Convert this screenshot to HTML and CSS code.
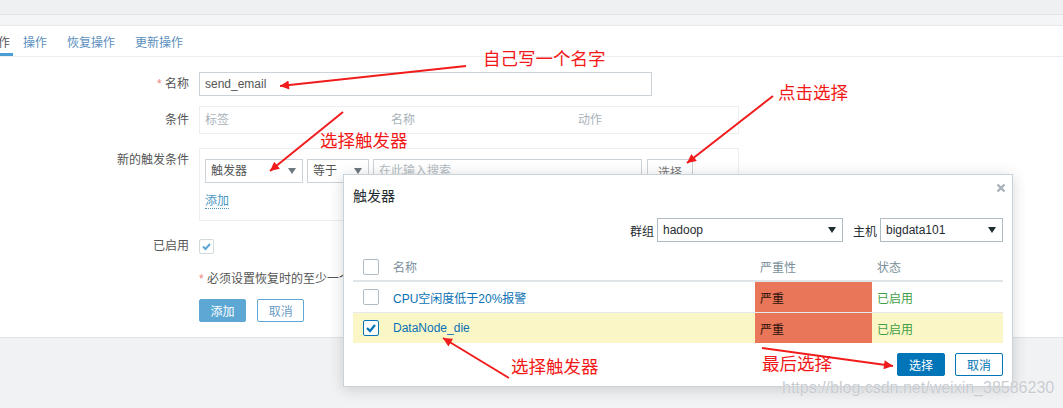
FILE: index.html
```html
<!DOCTYPE html>
<html lang="zh-CN">
<head>
    <meta charset="UTF-8" />
    <title>动作</title>
    <link rel="stylesheet" href="styles.css">
</head>
<body>
    <div class="topbar"></div>
    <div class="subbar"></div>

    <!-- 动作编辑 -->
    <div class="panel">
        <ul class="tabs">
            <li class="active"><a href="#">动作</a></li>
            <li><a href="#">操作</a></li>
            <li><a href="#">恢复操作</a></li>
            <li><a href="#">更新操作</a></li>
        </ul>

        <form class="action-form">
            <div class="form-group group-name">
                <label class="form-label"><span class="req">*</span> 名称</label>
                <div class="form-field">
                    <input type="text" class="text-input name-input" value="send_email" />
                </div>
            </div>
            <div class="form-group group-cond">
                <label class="form-label">条件</label>
                <div class="form-field">
                    <div class="cond-table">
                        <span>标签</span><span>名称</span><span>动作</span>
                    </div>
                </div>
            </div>
            <div class="form-group group-new">
                <label class="form-label">新的触发条件</label>
                <div class="form-field">
                    <div class="new-box">
                        <div class="new-line">
                            <div class="select sel-type">触发器<i class="caret"></i></div>
                            <div class="select sel-op">等于<i class="caret"></i></div>
                            <input type="text" class="text-input search-input" placeholder="在此输入搜索" />
                            <button type="button" class="btn-light">选择</button>
                        </div>
                        <a href="#" class="link-add">添加</a>
                    </div>
                </div>
            </div>
            <div class="form-group group-enabled">
                <label class="form-label">已启用</label>
                <div class="form-field">
                    <span class="chk chk-form">
                        <svg width="13" height="13" viewBox="0 0 13 13"><polyline points="3,6.5 5.5,9 10,4" fill="none" stroke="#5ca7d4" stroke-width="2" /></svg>
                    </span>
                </div>
            </div>
            <div class="form-group group-hint">
                <div class="form-label"></div>
                <div class="form-field hint"><span class="req">*</span> 必须设置恢复时的至少一个操作或更新操作。</div>
            </div>
            <div class="form-group group-btns">
                <div class="form-label"></div>
                <div class="form-field">
                    <button type="button" class="btn-add">添加</button>
                    <button type="button" class="btn-cancel">取消</button>
                </div>
            </div>
        </form>
    </div>

    <!-- 触发器 选择 팝업 -->
    <div class="modal">
        <div class="modal-head">触发器</div>
        <span class="modal-close">
            <svg width="10" height="10" viewBox="0 0 10 10"><path d="M1.5,1.5 L8.5,8.5 M8.5,1.5 L1.5,8.5" stroke="#a9b2ba" stroke-width="2.4" /></svg>
        </span>
        <div class="modal-filter">
            <label>群组</label>
            <div class="select sel-group">hadoop<i class="caret dark"></i></div>
            <label class="lbl-host">主机</label>
            <div class="select sel-host">bigdata101<i class="caret dark"></i></div>
        </div>
        <div class="list">
            <div class="list-head">
                <div class="cell"><span class="chk"></span></div>
                <div class="cell">名称</div>
                <div class="cell pad">严重性</div>
                <div class="cell pad">状态</div>
            </div>
            <div class="list-row">
                <div class="cell"><span class="chk"></span></div>
                <div class="cell"><a href="#">CPU空闲度低于20%报警</a></div>
                <div class="cell pad sev-high">严重</div>
                <div class="cell pad on">已启用</div>
            </div>
            <div class="list-row selected">
                <div class="cell">
                    <span class="chk checked">
                        <svg width="14" height="14" viewBox="0 0 14 14"><polyline points="3,7 6,10 11,4" fill="none" stroke="#0275b8" stroke-width="2.2" /></svg>
                    </span>
                </div>
                <div class="cell"><a href="#">DataNode_die</a></div>
                <div class="cell pad sev-high">严重</div>
                <div class="cell pad on">已启用</div>
            </div>
        </div>
        <div class="modal-foot">
            <button type="button" class="btn-primary">选择</button>
            <button type="button" class="btn-outline">取消</button>
        </div>
    </div>

    <!-- 주석 화살표 -->
    <svg class="marks" width="1063" height="408" viewBox="0 0 1063 408">
        <defs>
            <marker id="head" viewBox="0 0 10 10" refX="10" refY="5" markerWidth="7.5" markerHeight="4.5" orient="auto">
                <path d="M0,0 L10,5 L0,10 z" fill="#f01c1c" />
            </marker>
        </defs>
        <line x1="466" y1="66" x2="280" y2="86" stroke="#f01c1c" stroke-width="2" marker-end="url(#head)" />
        <line x1="343" y1="112" x2="270" y2="171" stroke="#f01c1c" stroke-width="2" marker-end="url(#head)" />
        <line x1="773" y1="96" x2="687" y2="163" stroke="#f01c1c" stroke-width="2" marker-end="url(#head)" />
        <line x1="509" y1="378" x2="443" y2="338" stroke="#f01c1c" stroke-width="2" marker-end="url(#head)" />
        <line x1="762" y1="348" x2="893" y2="366" stroke="#f01c1c" stroke-width="2" marker-end="url(#head)" />
    </svg>
    <span class="note note-name">自己写一个名字</span>
    <span class="note note-type">选择触发器</span>
    <span class="note note-click">点击选择</span>
    <span class="note note-pick">选择触发器</span>
    <span class="note note-last">最后选择</span>

    <span class="watermark">https://blog.csdn.net/weixin_38586230</span>
</body>
</html>
```

FILE: styles.css
```css
* {
    box-sizing:border-box;
}
body {
    position:relative;
    width:1063px;
    height:408px;
    margin:0;
    overflow:hidden;
    background:#f0f2f4;
    font-family:"Liberation Sans", "Noto Sans CJK SC", sans-serif;
    font-size:12px;
    color:#555;
}
a {
    text-decoration:none;
}
button, input {
    font-family:inherit;
    font-size:12px;
}
.topbar {
    height:15px;
    background:#eff0f2;
    border-bottom:1px solid #e1e4e7;
}
.subbar {
    height:11px;
    background:#f4f5f7;
    border-bottom:1px solid #e6e9ec;
}
.panel {
    background:#fff;
    border-bottom:1px solid #dfe3e6;
    padding-bottom:15px;
}

/* 탭 */
.tabs {
    display:flex;
    margin:0 0 0 -17px;
    padding:0;
    list-style:none;
    height:31px;
    border-bottom:1px solid #ebeef0;
}
.tabs li {
    margin-right:14px;
}
.tabs li.active {
    margin-right:7px;
}
.tabs a {
    display:block;
    height:30px;
    padding:7px 3px 0;
    line-height:20px;
    color:#5b8fbd;
    border-bottom:3px solid transparent;
}
.tabs .active a {
    color:#555;
    border-bottom-color:#4a9dd2;
}

/* 폼 */
.action-form {
    padding-top:15px;
}
.form-group {
    display:flex;
}
.form-label {
    flex-shrink:0;
    width:189px;
    margin-right:10px;
    text-align:right;
    color:#555;
}
.req {
    color:#e8877f;
}
.group-name .form-label {
    line-height:24px;
}
.text-input {
    height:24px;
    padding:0 5px;
    border:1px solid #cbd3d8;
    color:#555;
    outline:none;
}
.text-input::placeholder {
    color:#b4bcc2;
}
.name-input {
    width:453px;
}
.group-cond {
    margin-top:10px;
}
.group-cond .form-label {
    line-height:28px;
}
.cond-table {
    display:grid;
    grid-template-columns:186px 187px 1fr;
    width:540px;
    height:28px;
    line-height:26px;
    border:1px solid #eceff1;
    color:#a9b2b9;
}
.cond-table span {
    padding-left:5px;
}
.group-new {
    margin-top:14px;
}
.group-new .form-label {
    padding-top:5px;
    line-height:14px;
}
.new-box {
    width:540px;
    padding:10px 5px 11px;
    border:1px solid #eceff1;
}
.new-line {
    display:flex;
    gap:4px;
}
.select {
    position:relative;
    height:24px;
    padding:0 5px;
    line-height:22px;
    border:1px solid #cbd3d8;
    color:#555;
    background:#fff;
}
.caret {
    position:absolute;
    right:6px;
    top:8px;
    border-left:4px solid transparent;
    border-right:4px solid transparent;
    border-top:6px solid #6d777e;
}
.caret.dark {
    border-top-color:#1f2c33;
}
.sel-type {
    width:98px;
}
.sel-op {
    width:62px;
}
.search-input {
    width:269px;
}
.btn-light {
    width:46px;
    height:24px;
    padding:0;
    margin-left:1px;
    border:1px solid #cbd3d8;
    background:#fff;
    color:#777;
}
.link-add {
    display:inline-block;
    margin-top:11px;
    line-height:14px;
    color:#4796c4;
    border-bottom:1px dotted #4796c4;
}
.group-enabled {
    margin-top:18px;
}
.group-enabled .form-label {
    line-height:15px;
}
.chk {
    display:inline-flex;
    align-items:center;
    justify-content:center;
    width:16px;
    height:16px;
    border:1px solid #aebcc4;
    border-radius:2px;
    background:#fff;
}
.chk-form {
    width:15px;
    height:15px;
    border-color:#d3dade;
}
.chk.checked {
    border-color:#0275b8;
}
.group-hint {
    margin-top:16px;
}
.hint {
    line-height:14px;
    color:#555;
}
.group-btns {
    margin-top:13px;
}
.btn-add, .btn-cancel, .btn-primary, .btn-outline {
    width:47px;
    height:23px;
    padding:0;
    border-radius:2px;
    cursor:pointer;
}
.btn-add {
    border:1px solid #5ca7d4;
    background:#5ca7d4;
    color:#fff;
}
.btn-cancel {
    margin-left:8px;
    border:1px solid #5ca7d4;
    background:#fff;
    color:#6b9dc6;
}

/* 팝업 */
.modal {
    position:absolute;
    left:343px;
    top:174px;
    width:670px;
    height:213px;
    padding:0 9px;
    background:#fff;
    border:1px solid #c9d2d9;
    box-shadow:0 2px 14px rgba(0, 0, 0, .16);
    color:#1f2c33;
}
.modal-head {
    height:42px;
    line-height:42px;
    font-size:14px;
}
.modal-close {
    position:absolute;
    right:6px;
    top:7px;
}
.modal-filter {
    display:flex;
    justify-content:flex-end;
    align-items:center;
    margin-top:1px;
}
.modal-filter label {
    margin-right:3px;
}
.modal-filter .lbl-host {
    margin-left:10px;
}
.modal-filter .select {
    border-color:#aebcc4;
    color:#1f2c33;
}
.sel-group {
    width:186px;
}
.sel-host {
    width:123px;
}
.list {
    margin-top:11px;
}
.list-head, .list-row {
    display:grid;
    grid-template-columns:40px 362px 117px 131px;
}
.list-head {
    height:29px;
    border-bottom:2px solid #dfe4e7;
    color:#7a8f9a;
}
.list-row {
    height:31px;
    border-bottom:1px solid #e6eaec;
}
.list-row.selected {
    height:30px;
    border-bottom:none;
    background:#fbf6c6;
}
.cell {
    display:flex;
    align-items:center;
}
.cell:first-child {
    padding-left:10px;
}
.cell.pad {
    padding-left:5px;
}
.cell a {
    color:#0a72b5;
}
.sev-high {
    background:#e97659;
    color:#2b1008;
}
.on {
    color:#3f9f45;
}
.modal-foot {
    display:flex;
    justify-content:flex-end;
    gap:10px;
    margin-top:10px;
}
.btn-primary {
    width:48px;
    border:1px solid #0275b8;
    background:#0275b8;
    color:#fff;
}
.btn-outline {
    width:48px;
    border:1px solid #0275b8;
    background:#fff;
    color:#0275b8;
}

/* 주석 */
.marks {
    position:absolute;
    left:0;
    top:0;
    pointer-events:none;
}
.note {
    position:absolute;
    font-size:17.5px;
    line-height:17px;
    color:#f21818;
    white-space:nowrap;
}
.note-name {
    left:483px;
    top:51px;
}
.note-type {
    left:320px;
    top:133px;
}
.note-click {
    left:778px;
    top:85px;
}
.note-pick {
    left:511px;
    top:359px;
}
.note-last {
    left:762px;
    top:356px;
}
.watermark {
    position:absolute;
    left:782px;
    top:379px;
    font-size:16px;
    line-height:18px;
    color:rgba(185, 190, 196, .8);
    text-shadow:0 0 1px #fff;
    white-space:nowrap;
}
```
